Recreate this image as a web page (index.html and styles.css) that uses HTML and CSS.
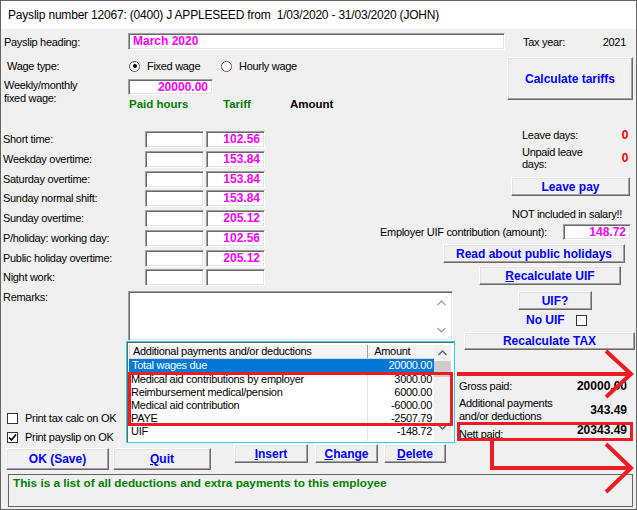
FILE: index.html
```html
<!DOCTYPE html>
<html lang="en">

<head>
    <meta charset="UTF-8">
    <title>Payslip</title>
    <link rel="stylesheet" href="styles.css">
</head>

<body>
    <div class="window">
        <div class="titlebar">Payslip number 12067: (0400) J APPLESEED from&nbsp; 1/03/2020 - 31/03/2020 (JOHN)</div>

        <!-- Heading and tax year -->
        <div class="row-heading">
            <span class="lbl">Payslip heading:</span>
            <div class="field heading-field val">March 2020</div>
            <span class="taxyear-lbl">Tax year:</span>
            <span class="taxyear">2021</span>
        </div>

        <!-- Wage type and fixed wage -->
        <div class="wage-block">
            <div class="wage-left">
                <div class="wage-type">
                    <span class="lbl wage-lbl">Wage type:</span>
                    <span class="option"><span class="radio checked"></span>Fixed wage</span>
                    <span class="option"><span class="radio"></span>Hourly wage</span>
                </div>
                <div class="fixed-row">
                    <span class="lbl two-line">Weekly/monthly<br>fixed wage:</span>
                    <div>
                        <div class="field wage-field val">20000.00</div>
                        <div class="col-heads">
                            <span class="green head-hours">Paid hours</span>
                            <span class="green head-tariff">Tariff</span>
                            <span class="head-amount">Amount</span>
                        </div>
                    </div>
                </div>
            </div>
            <button class="btn btn-tariffs">Calculate tariffs</button>
        </div>

        <!-- Rates and leave -->
        <div class="rates-block">
            <div class="rates">
                <span class="rate-lbl">Short time:</span>
                <div class="field"></div>
                <div class="field val num">102.56</div>
                <span class="rate-lbl">Weekday overtime:</span>
                <div class="field"></div>
                <div class="field val num">153.84</div>
                <span class="rate-lbl">Saturday overtime:</span>
                <div class="field"></div>
                <div class="field val num">153.84</div>
                <span class="rate-lbl">Sunday normal shift:</span>
                <div class="field"></div>
                <div class="field val num">153.84</div>
                <span class="rate-lbl">Sunday overtime:</span>
                <div class="field"></div>
                <div class="field val num">205.12</div>
                <span class="rate-lbl">P/holiday: working day:</span>
                <div class="field"></div>
                <div class="field val num">102.56</div>
                <span class="rate-lbl">Public holiday overtime:</span>
                <div class="field"></div>
                <div class="field val num">205.12</div>
                <span class="rate-lbl">Night work:</span>
                <div class="field"></div>
                <div class="field"></div>
            </div>

            <div class="leave">
                <div class="leave-row">
                    <span class="leave-lbl">Leave days:</span>
                    <span class="red">0</span>
                </div>
                <div class="leave-row leave-row2">
                    <span class="leave-lbl">Unpaid leave<br>days:</span>
                    <span class="red">0</span>
                </div>
                <button class="btn btn-leave">Leave pay</button>
                <div class="note">NOT included in salary!!</div>
                <div class="uif-row">
                    <span class="uif-lbl">Employer UIF contribution (amount):</span>
                    <div class="field val num uif-field">148.72</div>
                </div>
                <button class="btn btn-holidays">Read about public holidays</button>
                <button class="btn btn-recalc-uif"><u>R</u>ecalculate UIF</button>
            </div>
        </div>

        <!-- Remarks, list of payments and totals -->
        <div class="list-block">
            <div class="list-left">
                <div class="remarks-row">
                    <span class="lbl remarks-lbl">Remarks:</span>
                    <div class="field remarks">
                        <div class="vscroll plain">
                            <svg width="9" height="6" viewBox="0 0 9 6"><polyline points="0.5,5 4.5,1 8.5,5" fill="none" stroke="#a0a0a0" stroke-width="1.4"/></svg>
                            <svg width="9" height="6" viewBox="0 0 9 6"><polyline points="0.5,1 4.5,5 8.5,1" fill="none" stroke="#a0a0a0" stroke-width="1.4"/></svg>
                        </div>
                    </div>
                </div>
                <div class="table-row">
                    <div class="print-opts">
                        <label class="check-row"><span class="check"></span>Print tax calc on OK</label>
                        <label class="check-row"><span class="check"><svg width="9" height="9" viewBox="0 0 9 9"><polyline points="1,4.5 3.5,7 8,1.5" fill="none" stroke="#000" stroke-width="1.6"/></svg></span>Print payslip on OK</label>
                    </div>
                    <div class="list">
                        <div class="list-main">
                            <div class="list-head">
                                <span class="c1">Additional payments and/or deductions</span>
                                <span class="c2">Amount</span>
                            </div>
                            <div class="list-row sel"><span class="c1">Total wages due</span><span class="c2">20000.00</span></div>
                            <div class="list-row"><span class="c1">Medical aid contributions by employer</span><span class="c2">3000.00</span></div>
                            <div class="list-row"><span class="c1">Reimbursement medical/pension</span><span class="c2">6000.00</span></div>
                            <div class="list-row"><span class="c1">Medical aid contribution</span><span class="c2">-6000.00</span></div>
                            <div class="list-row"><span class="c1">PAYE</span><span class="c2">-2507.79</span></div>
                            <div class="list-row"><span class="c1">UIF</span><span class="c2">-148.72</span></div>
                            <div class="list-row"><span class="c1"></span><span class="c2"></span></div>
                        </div>
                        <div class="vscroll">
                            <svg width="9" height="6" viewBox="0 0 9 6"><polyline points="0.5,5 4.5,1 8.5,5" fill="none" stroke="#606060" stroke-width="1.4"/></svg>
                            <div class="thumb"></div>
                            <svg class="down" width="9" height="6" viewBox="0 0 9 6"><polyline points="0.5,1 4.5,5 8.5,1" fill="none" stroke="#606060" stroke-width="1.4"/></svg>
                        </div>
                    </div>
                </div>
            </div>

            <div class="list-right">
                <button class="btn btn-uif">UIF?</button>
                <div class="no-uif">
                    <span class="no-uif-lbl">No UIF</span>
                    <span class="check"></span>
                </div>
                <button class="btn btn-recalc-tax">Recalculate TAX</button>
                <div class="total-row gross">
                    <span>Gross paid:</span>
                    <span class="total">20000.00</span>
                </div>
                <div class="total-row extra">
                    <span>Additional payments<br>and/or deductions</span>
                    <span class="total">343.49</span>
                </div>
                <div class="total-row nett">
                    <span class="nett-lbl">Nett paid:</span>
                    <span class="total">20343.49</span>
                </div>
            </div>
        </div>

        <!-- Action buttons -->
        <div class="actions">
            <button class="btn btn-ok">OK (Save)</button>
            <button class="btn btn-quit"><u>Q</u>uit</button>
            <button class="btn btn-insert"><u>I</u>nsert</button>
            <button class="btn btn-change"><u>C</u>hange</button>
            <button class="btn btn-delete"><u>D</u>elete</button>
        </div>

        <div class="status">This is a list of all deductions and extra payments to this employee</div>

        <!-- red markers drawn on top of the form -->
        <svg class="marks" width="637" height="510" viewBox="0 0 637 510">
            <g fill="none" stroke="#ed1c24">
                <rect x="129.5" y="373.5" width="322" height="51" stroke-width="3"/>
                <rect x="458.5" y="423.5" width="173" height="16" stroke-width="3"/>
                <line x1="457" y1="374" x2="630" y2="374" stroke-width="4"/>
                <polyline points="606,351 631,374 606,397" stroke-width="4"/>
                <polyline points="492,441 492,468 630,468" stroke-width="4"/>
                <polyline points="606,444 631,468 606,492" stroke-width="4"/>
            </g>
        </svg>
    </div>
</body>

</html>
```

FILE: styles.css
```css
* {
    box-sizing: border-box;
}

body {
    margin: 0;
    background: #f0f0f0;
    font-family: "Liberation Sans", Arial, sans-serif;
    font-size: 11px;
    letter-spacing: -0.3px;
    color: #000;
}

.window {
    position: relative;
    width: 637px;
    height: 510px;
    border: 1px solid #646464;
    background: #f0f0f0;
    overflow: hidden;
}

.titlebar {
    height: 28px;
    line-height: 28px;
    padding-left: 7px;
    background: #fff;
    font-size: 12px;
    letter-spacing: -0.2px;
}

.lbl {
    width: 127px;
    padding-left: 3px;
    flex-shrink: 0;
}

.val {
    color: #ff00ff;
    font-weight: bold;
    font-size: 12px;
    letter-spacing: 0;
}

.num {
    text-align: right;
    padding-right: 4px;
}

.green {
    color: #008000;
    font-weight: bold;
    font-size: 11.5px;
    letter-spacing: 0;
}

.red {
    color: #ff0000;
    font-weight: bold;
    font-size: 12px;
}

/* sunken edit box */
.field {
    background: #fff;
    border: 1px solid;
    border-color: #a0a0a0 #fff #fff #a0a0a0;
    box-shadow: inset 1px 1px #696969, inset -1px -1px #e3e3e3;
    line-height: 15px;
}

/* raised push button */
.btn {
    display: block;
    padding: 0;
    background: #f0f0f0;
    border: 1px solid;
    border-color: #fff #696969 #696969 #fff;
    box-shadow: inset -1px -1px #a0a0a0, inset 1px 1px #e3e3e3;
    font-family: "Liberation Sans", Arial, sans-serif;
    font-weight: bold;
    font-size: 12px;
    letter-spacing: 0;
    color: #0000ff;
    height: 19px;
    line-height: 16px;
}

/* heading row */
.row-heading {
    display: flex;
    align-items: center;
    margin-top: 4px;
    height: 17px;
}

.heading-field {
    width: 377px;
    height: 17px;
    padding-left: 4px;
}

.taxyear-lbl {
    margin-left: 18px;
}

.taxyear {
    margin-left: auto;
    margin-right: 10px;
}

/* wage type */
.wage-block {
    display: flex;
    margin-top: 7px;
    height: 54px;
}

.wage-left {
    width: 505px;
}

.wage-type {
    display: flex;
    align-items: center;
    margin-top: 2px;
    height: 14px;
}

.wage-lbl {
    padding-left: 6px;
}

.option {
    display: flex;
    align-items: center;
    width: 91px;
    margin-left: 1px;
}

.radio {
    position: relative;
    width: 11px;
    height: 11px;
    margin-right: 7px;
    border: 1px solid #555;
    border-radius: 50%;
    background: #fff;
}

.radio.checked::after {
    content: "";
    position: absolute;
    left: 2.5px;
    top: 2.5px;
    width: 4px;
    height: 4px;
    border-radius: 50%;
    background: #000;
}

.fixed-row {
    display: flex;
    margin-top: 6px;
}

.two-line {
    line-height: 13px;
}

.wage-field {
    width: 85px;
    height: 16px;
    text-align: right;
    padding-right: 4px;
}

.col-heads {
    display: flex;
    margin-top: 3px;
    line-height: 13px;
}

.head-hours {
    width: 94px;
    margin-left: 1px;
}

.head-tariff {
    width: 67px;
}

.head-amount {
    font-weight: bold;
    font-size: 11.5px;
    letter-spacing: 0;
}

.btn-tariffs {
    width: 126px;
    height: 43px;
    margin-left: 1px;
}

/* tariff rows */
.rates-block {
    display: flex;
    margin-top: 20px;
}

.rates {
    display: grid;
    grid-template-columns: 142px 59px 59px;
    grid-auto-rows: 19.75px;
    column-gap: 2px;
    width: 262px;
}

.rates .field {
    height: 17px;
}

.rate-lbl {
    padding-left: 2px;
    line-height: 17px;
}

.leave {
    flex: 1;
}

.leave-row {
    display: flex;
    align-items: center;
    width: 106px;
    margin-left: 259px;
    margin-top: -2px;
    line-height: 13px;
}

.leave-row2 {
    margin-top: 4px;
    line-height: 12px;
}

.leave-lbl {
    flex: 1;
}

.btn-leave {
    width: 119px;
    margin: 7px 0 0 248px;
}

.note {
    margin: 12px 0 0 249px;
    line-height: 13px;
}

.uif-row {
    display: flex;
    align-items: center;
    margin: 3px 0 0 117px;
    height: 16px;
}

.uif-lbl {
    width: 183px;
}

.uif-field {
    width: 68px;
    height: 16px;
}

.btn-holidays {
    width: 182px;
    margin: 4px 0 0 180px;
}

.btn-recalc-uif {
    width: 142px;
    margin: 3px 0 0 216px;
}

/* remarks and list */
.list-block {
    display: flex;
    height: 155px;
}

.list-left {
    width: 455px;
}

.remarks-row {
    display: flex;
    height: 52px;
}

.remarks-lbl {
    margin-top: 2px;
    line-height: 13px;
    padding-left: 2px;
}

.remarks {
    display: flex;
    justify-content: flex-end;
    width: 325px;
    height: 50px;
    margin-top: 2px;
    padding: 2px;
}

.vscroll {
    display: flex;
    flex-direction: column;
    align-items: center;
    width: 17px;
    background: #f0f0f0;
}

.vscroll.plain {
    justify-content: space-between;
    padding: 6px 0 5px;
    background: #fff;
}

.table-row {
    display: flex;
    height: 103px;
}

.print-opts {
    display: flex;
    flex-direction: column;
    justify-content: flex-end;
    gap: 7px;
    width: 125px;
    padding-bottom: 1px;
}

.check-row {
    display: flex;
    align-items: center;
    height: 12px;
    padding-left: 6px;
}

.check {
    display: flex;
    align-items: center;
    justify-content: center;
    width: 11px;
    height: 11px;
    margin-right: 7px;
    border: 1px solid #333;
    background: #fff;
}

.list {
    display: flex;
    width: 329px;
    height: 102px;
    padding: 3px 1px 1px 1px;
    border: 1px solid #2ad4e4;
    box-shadow: inset 1px 1px #646464;
    background: #fff;
    overflow: hidden;
}

.list-main {
    width: 306px;
}

.list-head,
.list-row {
    display: flex;
    height: 13px;
    line-height: 15px;
}

.list-head {
    height: 14px;
    line-height: 13px;
    margin-left: 1px;
    background: #f5f5f5;
    border-bottom: 1px solid #d5d5d5;
}

.list-head .c1 {
    border-right: 1px solid #a0a0a0;
    border-left: 1px solid #d5d5d5;
}

.c1 {
    width: 240px;
    padding-left: 3px;
    white-space: nowrap;
    overflow: hidden;
}

.c2 {
    width: 66px;
    padding-right: 2px;
    text-align: right;
}

.list-head .c2 {
    text-align: left;
    padding-left: 6px;
}

.list-row .c1 {
    border-right: 1px solid #e8e8e8;
}

.list-row.sel {
    margin-left: 1px;
    line-height: 13px;
    background: #0078d7;
    color: #fff;
}

.list-row.sel .c1 {
    border-right-color: #0078d7;
}

.list .vscroll {
    padding-top: 5px;
}

.thumb {
    width: 17px;
    height: 16px;
    margin-top: 5px;
    background: #cdcdcd;
}

.vscroll .down {
    margin-top: 47px;
}

/* right side: UIF and totals */
.list-right {
    width: 180px;
}

.btn-uif {
    width: 74px;
    margin: 2px 0 0 62px;
}

.no-uif {
    display: flex;
    align-items: center;
    height: 12px;
    margin: 4px 0 0 70px;
}

.no-uif-lbl {
    width: 50px;
    color: #0000ff;
    font-weight: bold;
    font-size: 12px;
    letter-spacing: 0;
}

.btn-recalc-tax {
    width: 171px;
    height: 18px;
    margin: 6px 0 0 8px;
}

.total-row {
    display: flex;
    justify-content: space-between;
    align-items: center;
    width: 168px;
    margin-left: 3px;
    line-height: 13px;
}

.total {
    font-weight: bold;
    font-size: 12px;
    letter-spacing: 0;
}

.gross {
    margin-top: 30px;
}

.extra {
    margin-top: 4px;
}

.nett {
    align-items: flex-start;
}

.nett .total {
    margin-top: 1px;
}

.nett-lbl {
    margin-top: 5px;
}

/* bottom buttons */
.actions {
    display: flex;
    align-items: flex-start;
    height: 30px;
}

.btn-ok,
.btn-quit {
    height: 22px;
    margin-top: 4px;
    line-height: 19px;
}

.btn-ok {
    width: 103px;
    margin-left: 5px;
}

.btn-quit {
    width: 98px;
    margin-left: 4px;
}

.btn-insert {
    width: 74px;
    margin-left: 23px;
}

.btn-change {
    width: 63px;
    margin-left: 7px;
}

.btn-delete {
    width: 62px;
    margin-left: 6px;
}

.status {
    width: 625px;
    height: 33px;
    margin-left: 7px;
    padding: 1px 4px;
    line-height: 13px;
    border: 1px solid #646464;
    color: #008000;
    font-weight: bold;
    font-size: 11.75px;
    letter-spacing: 0;
}

.marks {
    position: absolute;
    left: -1px;
    top: -1px;
    pointer-events: none;
}
```
